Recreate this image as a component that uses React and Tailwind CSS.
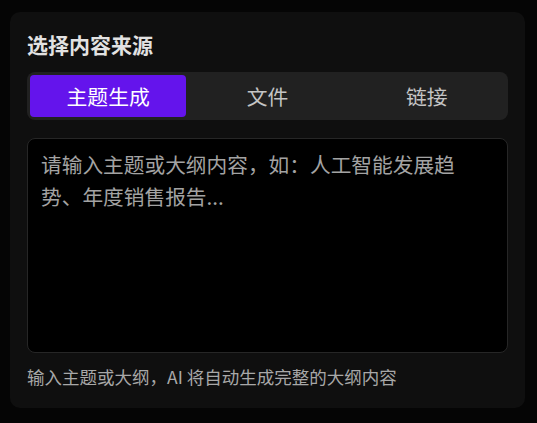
import React, { useState } from 'react';
import clsx from 'clsx';

const tabs = ['主题生成', '文件', '链接'];

const SourcePicker = () => {
    const [active, setActive] = useState(0);
    const [text, setText] = useState('');

    return (
        <div className="rounded-[10px] bg-[#0f0f0f] px-[17px] pt-[18px] pb-[18px]">
            <h3 className="text-[21px] leading-[28px] font-semibold text-[#e2e2e2]">选择内容来源</h3>

            <div className="mt-[14px] grid grid-cols-3 gap-[3px] rounded-[8px] bg-[#212121] p-[3px]">
                {tabs.map((t, i) => (
                    <button
                        key={t}
                        onClick={() => setActive(i)}
                        className={clsx(
                            "h-[42px] rounded-[4px] text-[20.8px] leading-[28px]",
                            i === active ? "bg-[#6414ec] text-white" : "text-[#c4c4c4]"
                        )}
                    >
                        {t}
                    </button>
                ))}
            </div>

            <textarea
                value={text}
                onChange={(e) => setText(e.target.value)}
                placeholder="请输入主题或大纲内容，如：人工智能发展趋势、年度销售报告..."
                className="mt-[18px] block h-[215px] w-full resize-none rounded-[8px] border border-[#262626] bg-black px-[13px] pt-[9px] text-[20.7px] leading-[32px] text-[#d0d0d0] placeholder-[#a3a3a3] focus:outline-none"
            />

            <p className="mt-[11px] text-[17.5px] leading-[26px] text-[#a8a8a8]">
                输入主题或大纲，AI 将自动生成完整的大纲内容
            </p>
        </div>
    );
};

export default function App() {
    return (
        <div
            className="min-h-screen bg-[#050505] pl-[10px] pr-[12px] pt-[12px]"
            style={{ fontFamily: '"Noto Sans CJK SC", "Noto Sans", sans-serif' }}
        >
            <SourcePicker />
        </div>
    );
}
